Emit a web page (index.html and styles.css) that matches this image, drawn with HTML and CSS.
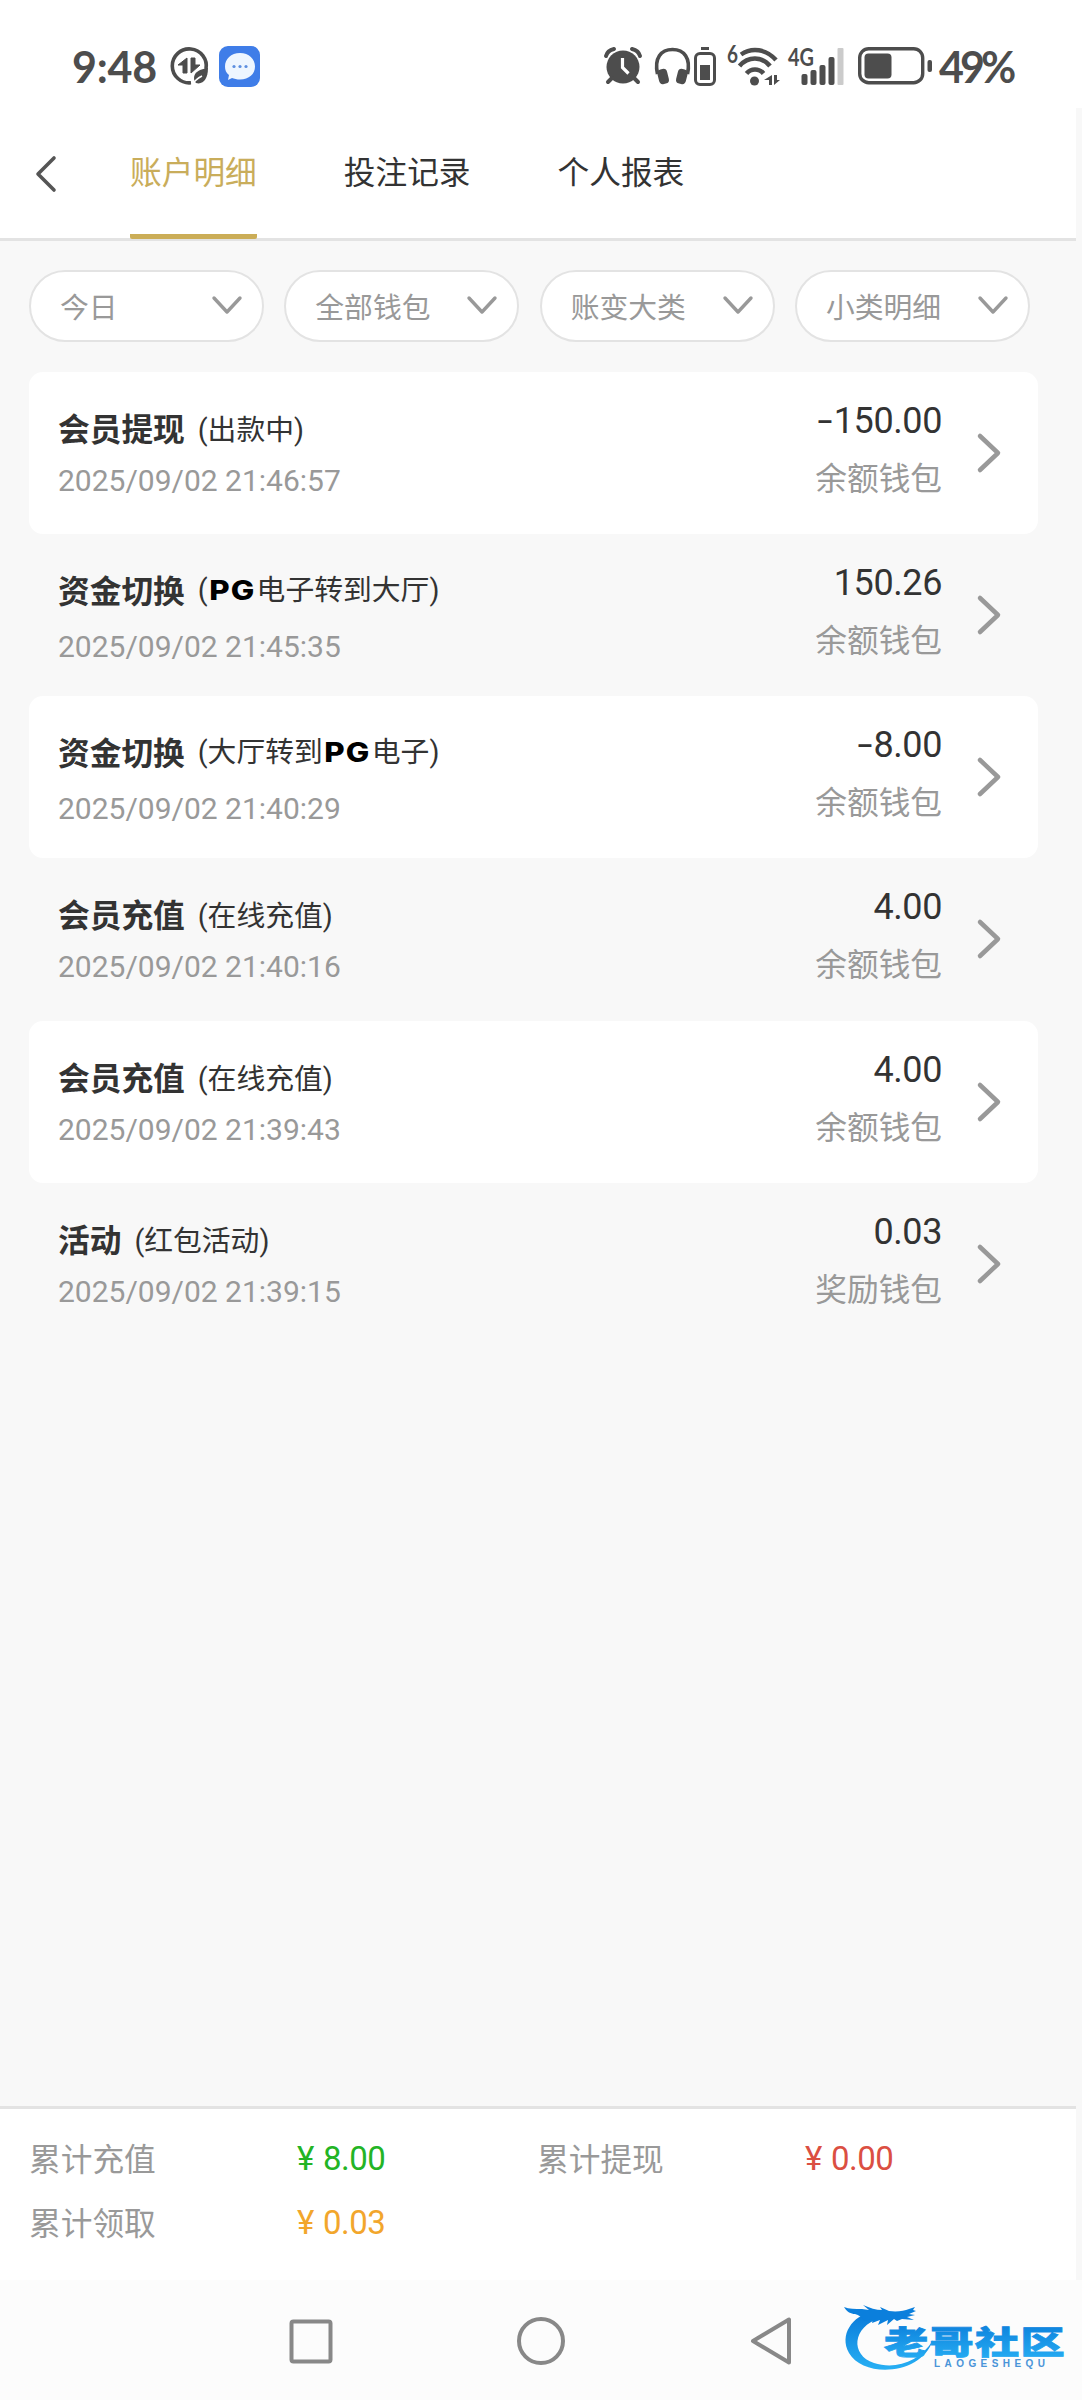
FILE: index.html
```
<!DOCTYPE html>
<html lang="zh-CN">

<head>
    <meta charset="UTF-8">
    <meta name="viewport" content="width=device-width, initial-scale=1.0">
    <title>账户明细</title>
    <link rel="stylesheet" href="styles.css">
</head>

<body>
    <div class="status-bar">
        <div class="status-left">
            <span class="time">9:48</span>
            <svg class="icon-data" width="38" height="38" viewBox="0 0 38 38">
                <path d="M36 22A17 17 0 1 0 21 35.8" fill="none" stroke="#4d4d4d" stroke-width="3.6" />
                <path d="M17 11v15h-4v-8H8zM21 11v15l9-8h-5v-7z" fill="#4d4d4d" stroke="#4d4d4d" stroke-linejoin="round" />
                <path d="M38 21c-8 1-14 4-14 10 0 2 1 4 2 5 7 2 12-4 12-15z" fill="#4d4d4d" />
                <path d="M22 38c3-5 6-7 10-9" fill="none" stroke="#fff" stroke-width="1.5" />
            </svg>
            <svg width="41" height="41" viewBox="0 0 41 41">
                <rect width="41" height="41" rx="9" fill="#3f7de8" />
                <path d="M21 7c9 0 15 6 15 13.500s-6 13-15 13c-3 0-6-.6-8-1.500L9 34l1-5c-3-2-4-5-4-8.500C6 13 12 7 21 7z" fill="#eef6ff" />
                <g fill="#5d8fe0">
                    <circle cx="15" cy="20.500" r="1.600" />
                    <circle cx="21" cy="20.500" r="1.600" />
                    <circle cx="27" cy="20.500" r="1.600" />
                </g>
            </svg>
        </div>
        <div class="status-right">
            <svg class="icon-alarm" width="38" height="38" viewBox="0 0 38 38">
                <circle cx="19" cy="20" r="16.500" fill="#4d4d4d" />
                <path d="M2 9c1-4 4-6 8-7M36 9c-1-4-4-6-8-7M8 31l-4 4M30 31l4 4" fill="none" stroke="#4d4d4d" stroke-width="4" stroke-linecap="round" />
                <path d="M18.500 11v9.500l6 6" fill="none" stroke="#fff" stroke-width="3.200" />
            </svg>
            <svg class="icon-phones" width="35" height="38" viewBox="0 0 35 38">
                <path d="M2.500 27C-1 11 6 2.500 17.500 2.500S36 11 32.500 27" fill="none" stroke="#4d4d4d" stroke-width="3.600" />
                <rect x="3" y="22" width="10" height="15" rx="4" fill="#4d4d4d" transform="rotate(-14 8 29)" />
                <rect x="22" y="22" width="10" height="15" rx="4" fill="#4d4d4d" transform="rotate(14 27 29)" />
            </svg>
            <svg class="icon-cell" width="22" height="39" viewBox="0 0 22 39">
                <rect x="7" y="0" width="8" height="3" fill="#4d4d4d" />
                <rect x="1.500" y="6.500" width="19" height="31" rx="4.500" fill="none" stroke="#4d4d4d" stroke-width="3" />
                <rect x="6" y="18" width="10" height="15" fill="#4d4d4d" />
            </svg>
            <svg class="icon-wifi" width="51" height="40" viewBox="0 0 51 40">
                <text x="-1" y="17" class="tiny" textLength="11" lengthAdjust="spacingAndGlyphs">6</text>
                <g fill="none" stroke="#4d4d4d" stroke-width="4.500">
                    <path d="M13 8.500C24 1 38 3 48 14" />
                    <path d="M11.500 20C20 10 34 10 42 20" />
                    <path d="M18.500 27.500C23 22 31 22 35.500 27.500" />
                </g>
                <circle cx="26.500" cy="35" r="4.500" fill="#4d4d4d" />
                <path d="M44 29v10h-3v-5h-5zM46 29v10l6-5h-3v-5z" fill="#4d4d4d" />
            </svg>
            <svg class="icon-signal" width="55" height="40" viewBox="0 0 55 40">
                <text x="-1" y="20" class="tiny" textLength="26" lengthAdjust="spacingAndGlyphs">4G</text>
                <g fill="#4d4d4d">
                    <rect x="12.500" y="28" width="6" height="11" rx="2" />
                    <rect x="21.500" y="24" width="6" height="15" rx="2" />
                    <rect x="30.500" y="19" width="6" height="20" rx="2" />
                    <rect x="39.500" y="11" width="6" height="28" rx="2" />
                </g>
                <rect x="48.500" y="2" width="6" height="37" rx="1" fill="#cbcbcb" />
            </svg>
            <svg class="icon-battery" width="75" height="38" viewBox="0 0 75 38">
                <rect x="1.700" y="1.700" width="63" height="34" rx="9" fill="none" stroke="#4d4d4d" stroke-width="3.400" />
                <rect x="6.500" y="6.500" width="27" height="25" rx="4" fill="#4d4d4d" />
                <rect x="69.500" y="13" width="4.500" height="12" rx="2" fill="#4d4d4d" />
            </svg>
            <span class="percent">49%</span>
        </div>
    </div>

    <div class="page">
        <div class="header">
            <svg class="back" width="22" height="36" viewBox="0 0 22 36">
                <path d="M19 2L3 18l16 16" fill="none" stroke="#555" stroke-width="3.600" stroke-linecap="round" stroke-linejoin="round" />
            </svg>
            <div class="tabs">
                <div class="tab active">账户明细</div>
                <div class="tab">投注记录</div>
                <div class="tab">个人报表</div>
            </div>
        </div>

        <div class="filters">
            <div class="filter">今日<svg class="down" width="30" height="18" viewBox="0 0 30 18"><path d="M2 2l13 14L28 2" /></svg></div>
            <div class="filter">全部钱包<svg class="down" width="30" height="18" viewBox="0 0 30 18"><path d="M2 2l13 14L28 2" /></svg></div>
            <div class="filter">账变大类<svg class="down" width="30" height="18" viewBox="0 0 30 18"><path d="M2 2l13 14L28 2" /></svg></div>
            <div class="filter">小类明细<svg class="down" width="30" height="18" viewBox="0 0 30 18"><path d="M2 2l13 14L28 2" /></svg></div>
        </div>

        <div class="list">
            <div class="item">
                <div class="info">
                    <div class="title">会员提现<span class="sub">(出款中)</span></div>
                    <div class="date">2025/09/02 21:46:57</div>
                </div>
                <div class="money">
                    <div class="amount"><span class="minus">-</span>150.00</div>
                    <div class="wallet">余额钱包</div>
                </div>
                <svg class="arrow" width="25" height="40" viewBox="0 0 25 40"><path d="M3 3l18 17L3 37" /></svg>
            </div>
            <div class="item transfer">
                <div class="info">
                    <div class="title">资金切换<span class="sub">(<b class="pg">PG</b>电子转到大厅)</span></div>
                    <div class="date">2025/09/02 21:45:35</div>
                </div>
                <div class="money">
                    <div class="amount">150.26</div>
                    <div class="wallet">余额钱包</div>
                </div>
                <svg class="arrow" width="25" height="40" viewBox="0 0 25 40"><path d="M3 3l18 17L3 37" /></svg>
            </div>
            <div class="item transfer">
                <div class="info">
                    <div class="title">资金切换<span class="sub">(大厅转到<b class="pg">PG</b>电子)</span></div>
                    <div class="date">2025/09/02 21:40:29</div>
                </div>
                <div class="money">
                    <div class="amount"><span class="minus">-</span>8.00</div>
                    <div class="wallet">余额钱包</div>
                </div>
                <svg class="arrow" width="25" height="40" viewBox="0 0 25 40"><path d="M3 3l18 17L3 37" /></svg>
            </div>
            <div class="item">
                <div class="info">
                    <div class="title">会员充值<span class="sub">(在线充值)</span></div>
                    <div class="date">2025/09/02 21:40:16</div>
                </div>
                <div class="money">
                    <div class="amount">4.00</div>
                    <div class="wallet">余额钱包</div>
                </div>
                <svg class="arrow" width="25" height="40" viewBox="0 0 25 40"><path d="M3 3l18 17L3 37" /></svg>
            </div>
            <div class="item">
                <div class="info">
                    <div class="title">会员充值<span class="sub">(在线充值)</span></div>
                    <div class="date">2025/09/02 21:39:43</div>
                </div>
                <div class="money">
                    <div class="amount">4.00</div>
                    <div class="wallet">余额钱包</div>
                </div>
                <svg class="arrow" width="25" height="40" viewBox="0 0 25 40"><path d="M3 3l18 17L3 37" /></svg>
            </div>
            <div class="item">
                <div class="info">
                    <div class="title">活动<span class="sub">(红包活动)</span></div>
                    <div class="date">2025/09/02 21:39:15</div>
                </div>
                <div class="money">
                    <div class="amount">0.03</div>
                    <div class="wallet">奖励钱包</div>
                </div>
                <svg class="arrow" width="25" height="40" viewBox="0 0 25 40"><path d="M3 3l18 17L3 37" /></svg>
            </div>
        </div>

        <div class="totals">
            <div class="total">
                <span class="label">累计充值</span>
                <span class="value green"><span class="yen">¥</span>8.00</span>
            </div>
            <div class="total">
                <span class="label">累计提现</span>
                <span class="value red"><span class="yen">¥</span>0.00</span>
            </div>
            <div class="total">
                <span class="label">累计领取</span>
                <span class="value orange"><span class="yen">¥</span>0.03</span>
            </div>
        </div>
    </div>

    <div class="nav-bar">
        <svg width="50" height="50" viewBox="0 0 50 50"><rect x="5.500" y="5.500" width="39" height="40" rx="2" /></svg>
        <svg width="50" height="50" viewBox="0 0 50 50"><circle cx="25" cy="25" r="22" /></svg>
        <svg width="50" height="50" viewBox="0 0 50 50"><path d="M7 25L43 3.500v43z" /></svg>
        <svg class="watermark" width="226" height="74" viewBox="0 0 226 74">
            <defs>
                <linearGradient id="blue" x1="0" y1="0" x2="0" y2="1">
                    <stop offset="0" stop-color="#0878d8" />
                    <stop offset="1" stop-color="#28b0f4" />
                </linearGradient>
            </defs>
            <!-- dragon -->
            <path d="M30 9C9 14-4 33 6 51c14 25 72 23 84-13-13 22-38 30-59 23C7 53 9 25 37 16z" fill="url(#blue)" />
            <path d="M1 5c5 2 11 2 18 2l7 1-6-5c7 3 13 5 19 5l-2-3 9 4c8 1 15 0 20-2l6-2-2 3 3 1-7 3 6 1-8 2 7 3-12-1-5 2-3-2-7 6 1-5-10 5 2-5-8 3 1-4-9 2c-2-4-5-6-9-7C8 12 4 10 1 5z" fill="#0b7fdc" />
            <g transform="translate(41 51.500) scale(1.38 1)">
                <text class="brand" fill="url(#blue)" stroke="url(#blue)">老哥社区</text>
            </g>
            <text class="brand-en" x="91" y="65" textLength="111">LAOGESHEQU</text>
        </svg>
    </div>
</body>

</html>
```

FILE: styles.css
```
* {
    box-sizing: border-box;
}

body {
    margin: 0;
    height: 2400px;
    display: flex;
    flex-direction: column;
    background-color: #f8f8f8;
    font-family: Roboto, "Noto Sans CJK SC", sans-serif;
    color: #333;
    overflow: hidden;
}

svg {
    display: block;
    flex: none;
    overflow: visible;
}

.status-bar {
    height: 108px;
    padding: 24px 65px 0 72px;
    display: flex;
    justify-content: space-between;
    align-items: flex-start;
    background-color: #fff;
    font-family: Lato, sans-serif;
    font-weight: bold;
    color: #4d4d4d;
}

.status-left,
.status-right {
    display: flex;
    align-items: center;
    height: 84px;
}

.status-bar > div {
    margin-top: 0;
}

.time {
    font-size: 43px;
    width: 98px;
    letter-spacing: -0.2px;
}

.icon-data {
    margin-right: 11px;
}

.percent {
    font-size: 43px;
    letter-spacing: -4px;
    width: 78px;
    white-space: nowrap;
}

.icon-alarm {
    margin-right: 13px;
}

.icon-phones {
    margin-right: 4px;
}

.icon-cell {
    margin-right: 12px;
}

.icon-wifi {
    margin-right: 10px;
}

.icon-signal {
    margin-right: 14px;
}

.icon-battery {
    margin-right: 6px;
}

.tiny {
    font-size: 24px;
    font-weight: bold;
    fill: #4d4d4d;
}

/* main page */

.page {
    width: 1076px;
    flex: 1;
    display: flex;
    flex-direction: column;
}

.header {
    height: 133px;
    padding-left: 35px;
    display: flex;
    background-color: #fff;
    border-bottom: 3px solid #e3e3e3;
}

.back {
    margin: 48px 73px 0 0;
}

.tabs {
    display: flex;
    gap: 87px;
}

.tab {
    height: 131px;
    font-size: 31.7px;
    line-height: 132px;
}

.tab.active {
    color: #c9ad5b;
    border-bottom: 5px solid #cbad57;
    border-radius: 2px;
}

.filters {
    display: grid;
    grid-template-columns: repeat(4, 1fr);
    gap: 20.3px;
    padding: 29px 46px 0 29px;
}

.filter {
    height: 72px;
    padding: 0 20px 2px 29px;
    display: flex;
    justify-content: space-between;
    align-items: center;
    background-color: #fff;
    border: 2.5px solid #e3e3e3;
    border-radius: 36px;
    font-size: 28.8px;
    color: #999;
}

.down path,
.arrow path {
    fill: none;
    stroke: #999;
    stroke-width: 3.4;
    stroke-linecap: round;
    stroke-linejoin: round;
}

.list {
    flex: 1;
    padding: 29.5px 38px 0 29px;
}

.item {
    height: 162.3px;
    padding: 0 36px 0 29px;
    display: flex;
    border-radius: 14px;
}

.item:nth-child(odd) {
    background-color: #fff;
}

.info {
    flex: 1;
    padding-top: 35px;
}

.title {
    height: 48px;
    line-height: 48px;
    font-size: 31.7px;
    font-weight: bold;
}

.sub {
    position: relative;
    top: -1px;
    margin-left: 13px;
    font-size: 28.8px;
    font-weight: normal;
}

.pg {
    display: inline-block;
    width: 49px;
    padding-left: 1px;
    font-family: Inter, sans-serif;
    font-size: 27px;
    font-weight: 800;
    line-height: 1;
    letter-spacing: 1px;
    color: #000;
    transform: scaleX(1.16);
    transform-origin: left;
}

.date {
    padding-top: 6px;
    line-height: 40px;
    font-size: 30px;
    color: #999;
}

.transfer .date {
    padding-top: 10px;
}

.transfer .sub {
    top: -3px;
}

.money {
    padding-top: 26px;
    text-align: right;
}

.amount {
    line-height: 46px;
    font-size: 36px;
    letter-spacing: -0.4px;
}

.minus {
    display: inline-block;
    margin-right: 4px;
    transform: scaleX(1.5);
}

.wallet {
    padding-top: 13px;
    line-height: 46px;
    font-size: 31.7px;
    color: #999;
}

.arrow {
    margin: 61px 0 0 35px;
}

.arrow path {
    stroke-width: 4.5;
}

.totals {
    height: 174px;
    padding: 17px 30px 0 29px;
    display: grid;
    grid-template-columns: 508px 508px;
    grid-auto-rows: 64px;
    background-color: #fff;
    border-top: 3px solid #e3e3e3;
}

.total {
    display: flex;
    align-items: center;
    font-size: 31.7px;
    color: #999;
}

.label {
    width: 268px;
    padding-bottom: 2px;
}

.value {
    font-size: 33px;
    letter-spacing: -0.5px;
}

.yen {
    display: inline-block;
    width: 26px;
}

.green {
    color: #23b425;
}

.red {
    color: #db4f42;
}

.orange {
    color: #f2a62c;
}

/* system navigation */

.nav-bar {
    position: relative;
    height: 120px;
    padding-top: 2px;
    display: flex;
    justify-content: center;
    align-items: center;
    gap: 180px;
    background-color: #fcfcfc;
}

.nav-bar > svg:not(.watermark) {
    fill: none;
    stroke: #888;
    stroke-width: 4;
    stroke-linejoin: round;
}

.watermark {
    position: absolute;
    left: 843px;
    top: 22px;
}

.brand {
    font-family: "Noto Sans CJK SC", sans-serif;
    font-size: 32px;
    font-weight: 900;
    stroke-width: 0.8;
    letter-spacing: 1px;
}

.brand-en {
    font-family: "Liberation Sans", sans-serif;
    font-size: 10px;
    font-weight: bold;
    fill: #4a94d8;
}
```
